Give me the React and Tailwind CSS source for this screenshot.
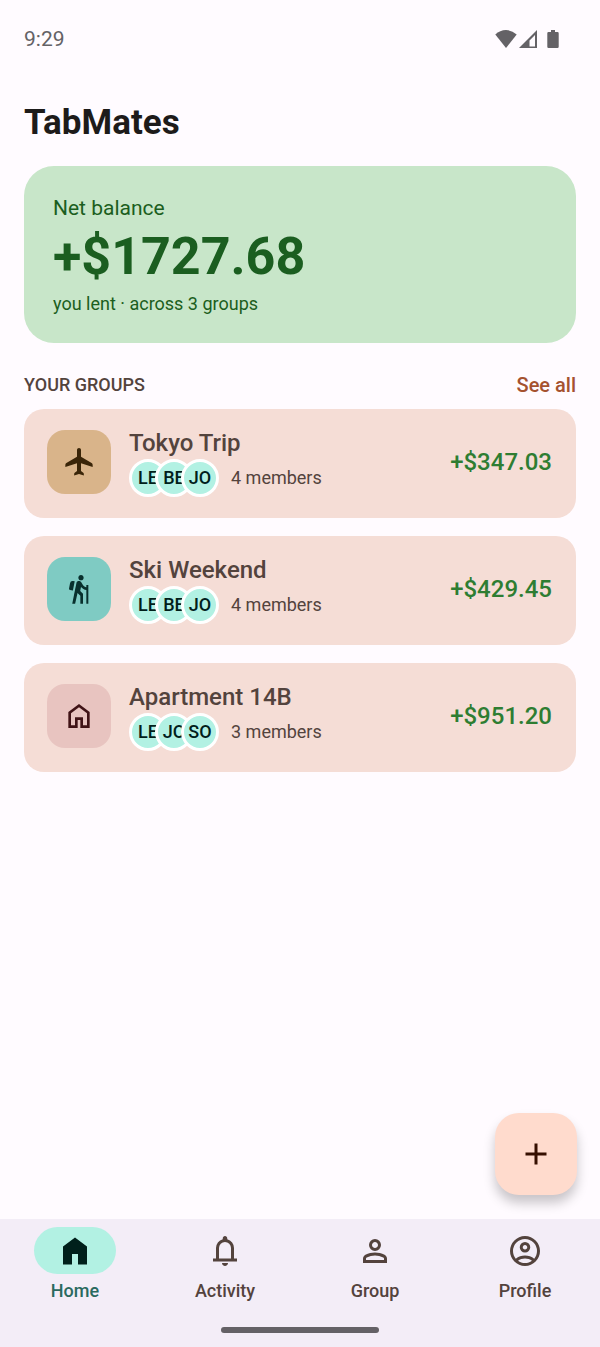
import React from "react";
import { MdHiking } from "react-icons/md";

// --- Icons (Material Symbols, 960 grid) ---
const paths = {
  home: "M240-200h120v-240h240v240h120v-360L480-740 240-560v360Zm-80 80v-480l320-240 320 240v480H520v-240h-80v240H160Z",
  homeFilled:
    "M160-120v-480l320-240 320 240v480H560v-280H400v280H160Z",
  bell: "M160-200v-80h80v-280q0-83 50-147.5T420-792v-28q0-25 17.5-42.5T480-880q25 0 42.5 17.5T540-820v28q80 20 130 84.5T720-560v280h80v80H160Zm320 120q-33 0-56.5-23.5T400-160h160q0 33-23.5 56.5T480-80ZM320-280h320v-280q0-66-47-113t-113-47q-66 0-113 47t-47 113v280Z",
  person:
    "M480-480q-66 0-113-47t-47-113q0-66 47-113t113-47q66 0 113 47t47 113q0 66-47 113t-113 47ZM160-160v-112q0-34 17.5-62.5T224-378q62-31 126-46.5T480-440q66 0 130 15.5T736-378q29 15 46.5 43.5T800-272v112H160Zm80-80h480v-32q0-11-5.5-20T700-306q-54-27-109-40.5T480-360q-56 0-111 13.5T260-306q-9 5-14.5 14t-5.5 20v32Zm240-320q33 0 56.5-23.5T560-640q0-33-23.5-56.5T480-720q-33 0-56.5 23.5T400-640q0 33 23.5 56.5T480-560Z",
  account:
    "M234-276q51-39 114-61.5T480-360q69 0 132 22.5T726-276q35-41 54.5-93T800-480q0-133-93.5-226.5T480-800q-133 0-226.5 93.5T160-480q0 59 19.5 111t54.5 93Zm246-164q-59 0-99.5-40.5T340-580q0-59 40.5-99.5T480-720q59 0 99.5 40.5T620-580q0 59-40.5 99.5T480-440Zm0 360q-83 0-156-31.5T197-197q-54-54-85.5-127T80-480q0-83 31.5-156T197-763q54-54 127-85.5T480-880q83 0 156 31.5T763-763q54 54 85.5 127T880-480q0 83-31.5 156T763-197q-54 54-127 85.5T480-80Zm0-80q53 0 100-15.5t86-44.5q-39-29-86-44.5T480-280q-53 0-100 15.5T294-220q39 29 86 44.5T480-160Zm0-360q26 0 43-17t17-43q0-26-17-43t-43-17q-26 0-43 17t-17 43q0 26 17 43t43 17Z",
  plane:
    "M420-840q0-25 17.500-42.500T480-900q25 0 42.500 17.500T540-840v200l318 192q32 20 32 58v60L540-440v232l68 52q17 13 17 34v44l-145-40-145 40v-44q0-21 17-34l68-52v-232L70-330v-60q0-38 32-58l318-192Z",
  add: "M440-440H200v-80h240v-240h80v240h240v80H520v240h-80v-240Z",
};

function Symbol({ name, className }) {
  return (
    <svg viewBox="0 -960 960 960" className={className} fill="currentColor" aria-hidden="true">
      <path d={paths[name]} />
    </svg>
  );
}

// --- Data ---
const groups = [
  {
    name: "Tokyo Trip",
    initials: ["LE", "BE", "JO"],
    members: 4,
    amount: "+$347.03",
    tile: "bg-[#d9b48a] text-[#3a2508]",
    icon: <Symbol name="plane" className="size-8" />,
  },
  {
    name: "Ski Weekend",
    initials: ["LE", "BE", "JO"],
    members: 4,
    amount: "+$429.45",
    tile: "bg-[#7fcbc3] text-[#08302d]",
    icon: <MdHiking className="size-8" />,
  },
  {
    name: "Apartment 14B",
    initials: ["LE", "JO", "SO"],
    members: 3,
    amount: "+$951.20",
    tile: "bg-[#e8c4c0] text-[#401316]",
    icon: <Symbol name="home" className="size-8" />,
  },
];

const tabs = [
  { label: "Home", icon: "homeFilled", active: true },
  { label: "Activity", icon: "bell" },
  { label: "Group", icon: "person" },
  { label: "Profile", icon: "account" },
];

function StatusBar() {
  return (
    <div className="flex items-center justify-between pl-6 pr-[41px] pt-6 text-[#646266]">
      <span className="text-[21px] leading-[30px]">9:29</span>
      <div className="flex items-center" aria-hidden="true">
        <svg viewBox="0 0 22 20" className="h-5 w-[22px]" fill="currentColor">
          <path d="M11 19 0.300 5.500Q5 1 11 1t10.700 4.500Z" />
        </svg>
        <svg viewBox="0 0 20 20" className="ml-0.5 size-5" fill="currentColor">
          <path fillRule="evenodd" d="M0 19 18 1v18ZM10.500 17.500h5.500V6l-5.500 5.500Z" />
        </svg>
        <svg viewBox="0 0 12 20" className="ml-2 h-5 w-3" fill="currentColor">
          <path d="M4 1h4v2h2.500q1.200 0 1.200 1.200v13.600q0 1.200-1.200 1.200h-9Q.3 19 .3 17.800V4.200Q.3 3 1.500 3H4Z" />
        </svg>
      </div>
    </div>
  );
}

function BalanceCard() {
  return (
    <section className="mt-5 rounded-[30px] bg-[#c8e6c9] px-[29px] pb-[26px] pt-[27px] text-[#1b5e20]">
      <p className="text-[21px] leading-[30px]">Net balance</p>
      <p className="text-[52px] font-bold leading-[68px]">+$1727.68</p>
      <p className="text-lg leading-[26px]">you lent · across 3 groups</p>
    </section>
  );
}

function GroupCard({ group }) {
  return (
    <li>
      <a
        href="#group"
        className="flex items-center rounded-[20px] bg-[#f5ddd6] pb-[21px] pl-[23px] pr-6 pt-[18px]"
      >
        <div className={`flex size-16 items-center justify-center rounded-[18px] ${group.tile}`}>
          {group.icon}
        </div>
        <div className="ml-[18px] flex-1">
          <h3 className="text-2xl font-medium leading-8 text-[#53433d]">{group.name}</h3>
          <div className="flex items-center">
            <div className="flex -space-x-3">
              {group.initials.map((initials) => (
                <span
                  key={initials}
                  className="flex size-[38px] items-center justify-center rounded-full border-3 border-white bg-[#b2f1e3] text-lg font-medium text-[#00201b]"
                >
                  {initials}
                </span>
              ))}
            </div>
            <span className="ml-3 text-lg text-[#53433d]">{group.members} members</span>
          </div>
        </div>
        <span className="text-2xl font-medium text-[#2e7d32]">{group.amount}</span>
      </a>
    </li>
  );
}

function BottomNav() {
  return (
    <nav className="bg-[#f3edf7] pt-2 pb-[14px]">
      <div className="grid grid-cols-4">
        {tabs.map((tab) => (
          <a
            key={tab.label}
            href={"#" + tab.label.toLowerCase()}
            className={`flex flex-col items-center gap-1 ${tab.active ? "text-[#2a6a5f]" : "text-[#53433d]"}`}
          >
            <span
              className={`flex h-[47px] w-[82px] items-center justify-center rounded-full ${
                tab.active ? "bg-[#b2f1e3] text-[#00201b]" : ""
              }`}
            >
              <Symbol name={tab.icon} className="size-9" />
            </span>
            <span className="text-lg font-medium leading-[26px]">{tab.label}</span>
          </a>
        ))}
      </div>
      {/* gesture handle */}
      <div className="mx-auto mt-[23px] h-[6px] w-[158px] rounded-full bg-[#646166]"></div>
    </nav>
  );
}

function App() {
  return (
    <div className="flex min-h-screen flex-col bg-[#fffbff] font-[Roboto,sans-serif]">
      <StatusBar />
      <main className="relative flex-1 px-6 pb-32 pt-[46px]">
        <h1 className="text-[35px] font-bold leading-[46px] text-[#1d1b1a]">TabMates</h1>
        <BalanceCard />
        <div className="mt-6 flex items-center justify-between">
          <h2 className="text-lg font-medium leading-9 text-[#53433d]">YOUR GROUPS</h2>
          <a href="#groups" className="text-xl font-medium leading-9 text-[#a5522f]">
            See all
          </a>
        </div>
        <ul className="mt-[6px] flex flex-col gap-[18px]">
          {groups.map((group) => (
            <GroupCard key={group.name} group={group} />
          ))}
        </ul>
        <button
          type="button"
          aria-label="Add expense"
          className="absolute bottom-6 right-[23px] flex size-[82px] items-center justify-center rounded-3xl bg-[#ffdbcd] text-[#360f00] shadow-[0_8px_12px_rgba(0,0,0,0.22)]"
        >
          <Symbol name="add" className="size-9" />
        </button>
      </main>
      <BottomNav />
    </div>
  );
}

export default App;
